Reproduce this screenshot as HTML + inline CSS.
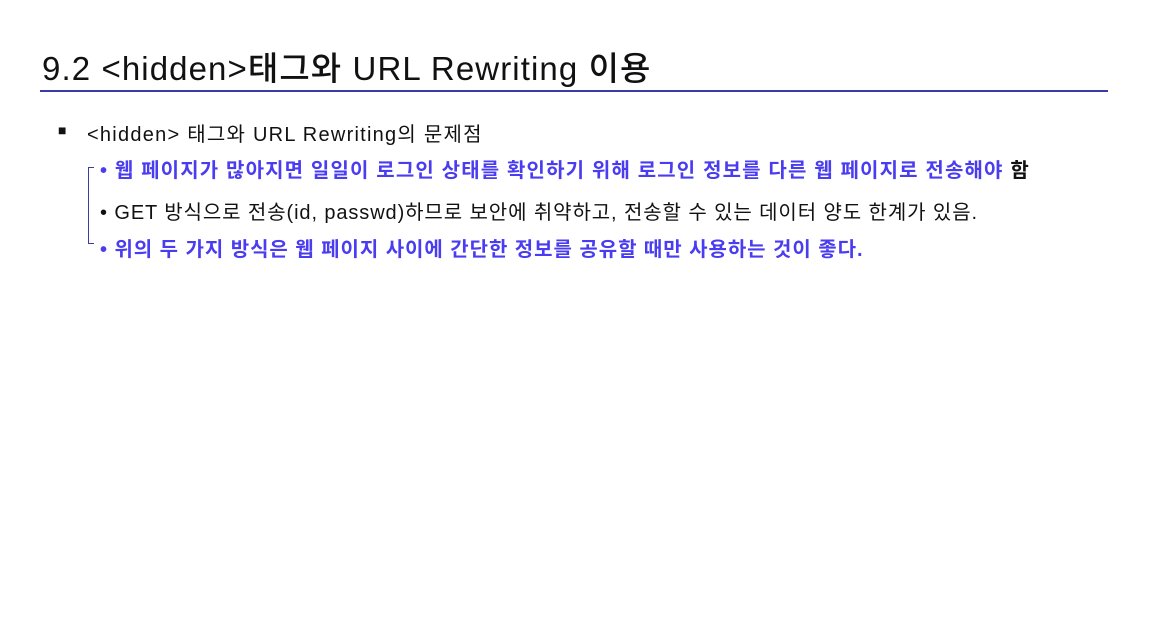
<!DOCTYPE html>
<html><head><meta charset="utf-8"><style>
body{margin:0;width:1149px;height:643px;background:#fff;overflow:hidden;position:relative;font-family:"Liberation Sans","Noto Sans CJK KR","NanumGothic",sans-serif;color:#111}
.t{position:absolute;white-space:nowrap}
#title{left:42px;top:42px;font-size:33px;font-weight:500;letter-spacing:1.1px}
#rule{position:absolute;left:40px;top:90px;width:1068px;height:2px;background:#3a3aa8}
.b{color:#4a3cf0;font-weight:bold}
.s{font-size:20px;letter-spacing:0.9px}
</style></head><body>
<div class="t" id="title">9.2 &lt;hidden&gt;태그와 URL Rewriting 이용</div>
<div id="rule"></div>
<div class="t" style="left:58px;top:122px;font-size:14px">■</div>
<div class="t s" style="left:87px;top:118px;letter-spacing:1.25px">&lt;hidden&gt; 태그와 URL Rewriting의 문제점</div>
<div style="position:absolute;left:88px;top:167px;width:1px;height:77px;background:#3a3aa8"></div>
<div style="position:absolute;left:88px;top:167px;width:6px;height:1px;background:#3a3aa8"></div>
<div style="position:absolute;left:88px;top:243px;width:6px;height:1px;background:#3a3aa8"></div>
<div class="t s b" style="left:100px;top:154px;letter-spacing:1.15px">• 웹 페이지가 많아지면 일일이 로그인 상태를 확인하기 위해 로그인 정보를 다른 웹 페이지로 전송해야 <span style="color:#111">함</span></div>
<div class="t s" style="left:100px;top:196px">• GET 방식으로 전송(id, passwd)하므로 보안에 취약하고, 전송할 수 있는 데이터 양도 한계가 있음.</div>
<div class="t s b" style="left:100px;top:233px;letter-spacing:0.95px">• 위의 두 가지 방식은 웹 페이지 사이에 간단한 정보를 공유할 때만 사용하는 것이 좋다.</div>
</body></html>
